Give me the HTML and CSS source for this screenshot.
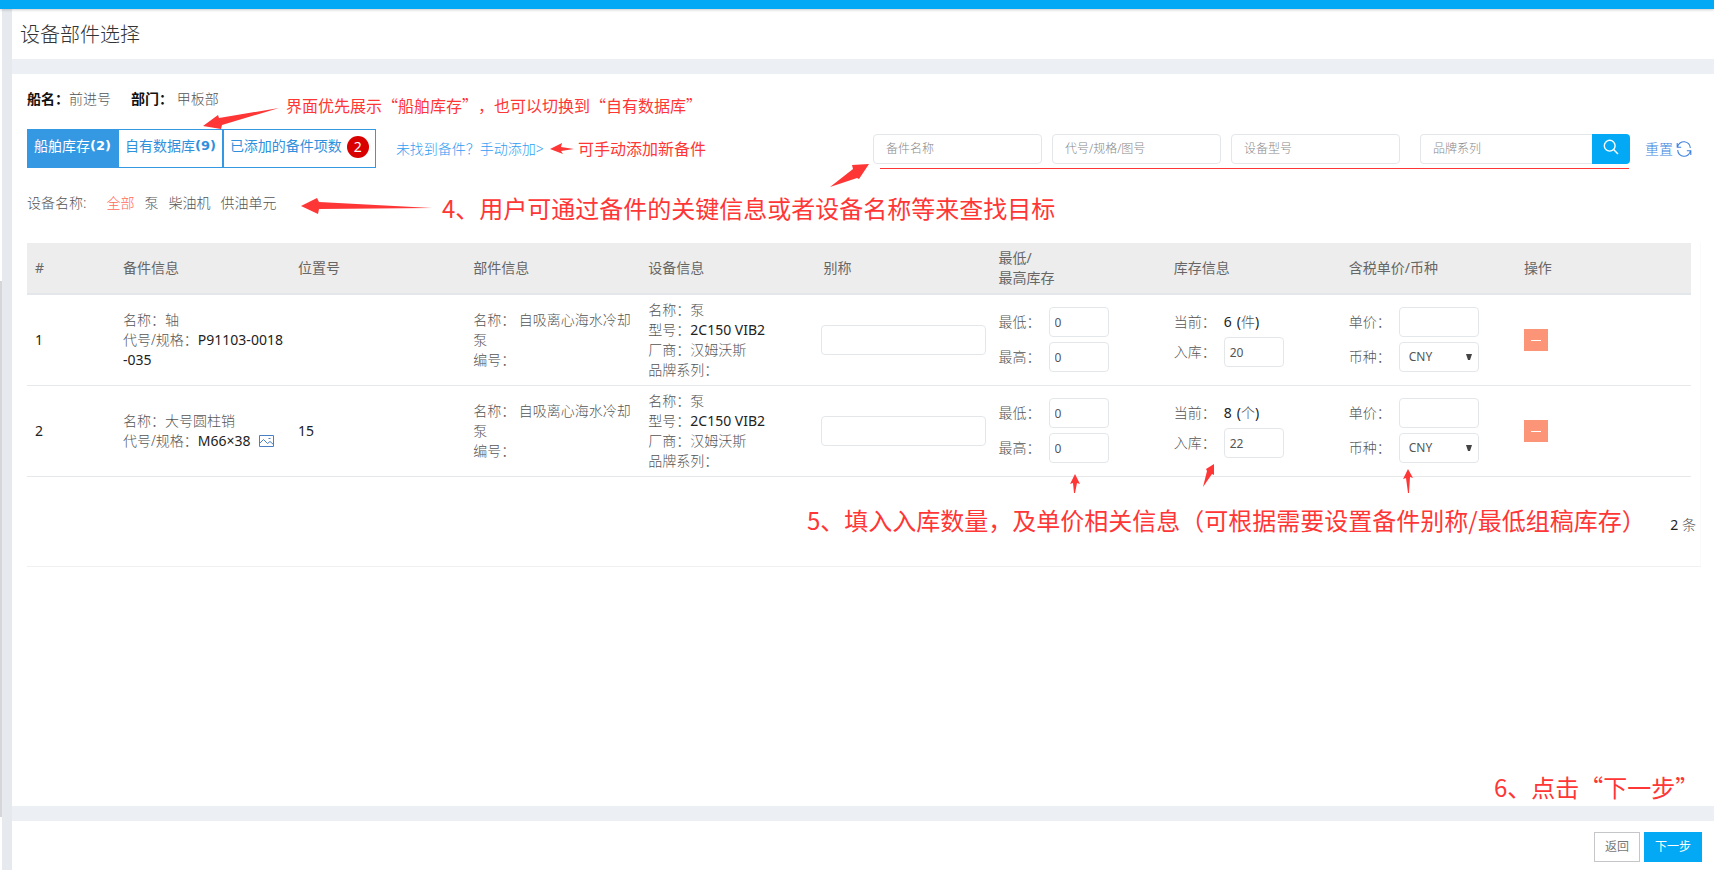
FILE: index.html
```html
<!DOCTYPE html>
<html lang="zh-CN">
<head>
<meta charset="utf-8">
<title>设备部件选择</title>
<link rel="stylesheet" href="styles.css">
</head>
<body>
<div class="topbar"></div>
<div class="shell">
  <div class="rail"><div class="rail-thumb"></div></div>
  <div class="content">
    <header class="card title-card"><h1>设备部件选择</h1></header>

    <main class="card main-card">
      <div class="info">
        <span><b>船名：</b>前进号</span>
        <span><b>部门：</b> 甲板部</span>
      </div>

      <div class="toolbar">
        <div class="tabs">
          <button class="tab active" type="button">船舶库存<b>(2)</b></button>
          <button class="tab" type="button">自有数据库<b>(9)</b></button>
          <button class="tab" type="button">已添加的备件项数<span class="badge">2</span></button>
        </div>
        <a class="add-link" href="#">未找到备件？手动添加&gt;</a>
        <form class="search">
          <input class="field" type="text" placeholder="备件名称" aria-label="备件名称">
          <input class="field" type="text" placeholder="代号/规格/图号" aria-label="代号/规格/图号">
          <input class="field" type="text" placeholder="设备型号" aria-label="设备型号">
          <div class="search-group">
            <input class="field" type="text" placeholder="品牌系列" aria-label="品牌系列">
            <button class="search-btn" type="button" aria-label="搜索">
              <svg width="16" height="16" viewBox="0 0 16 16" fill="none" stroke="currentColor" stroke-width="1.4"><circle cx="6.7" cy="6.7" r="5.4"/><path d="M10.6 10.6L15 15"/></svg>
            </button>
          </div>
          <a class="reset" href="#">重置
            <svg width="16" height="16" viewBox="0 0 16 16" fill="none" stroke="currentColor" stroke-width="1.1"><path d="M1.2 2v4.2h4M1.6 6A6.4 6.4 0 0 1 14.3 7M14.8 14V9.8h-4M14.4 10A6.4 6.4 0 0 1 1.7 9"/></svg>
          </a>
        </form>
      </div>

      <nav class="filter">
        <span class="filter-label">设备名称:</span>
        <a class="on" href="#">全部</a>
        <a href="#">泵</a>
        <a href="#">柴油机</a>
        <a href="#">供油单元</a>
      </nav>

      <section class="list">
        <table>
          <thead>
            <tr>
              <th class="col-no">#</th><th>备件信息</th><th>位置号</th><th>部件信息</th><th>设备信息</th><th>别称</th><th>最低/<br>最高库存</th><th>库存信息</th><th>含税单价/币种</th><th>操作</th>
            </tr>
          </thead>
          <tbody>
            <tr>
              <td>1</td>
              <td>名称：轴<br>代号/规格：<i>P91103-0018-035</i></td>
              <td></td>
              <td>名称： 自吸离心海水冷却泵<br>编号：</td>
              <td>名称：泵<br>型号：<i>2C150 VIB2</i><br>厂商：汉姆沃斯<br>品牌系列：</td>
              <td class="alias"><input class="field" type="text" aria-label="别称"></td>
              <td>
                <div class="pairs">
                  <label for="min1">最低：</label><input class="field num" id="min1" type="text" value="0">
                  <label for="max1">最高：</label><input class="field num" id="max1" type="text" value="0">
                </div>
              </td>
              <td>
                <div class="pairs">
                  <span>当前：</span><span class="stock"><i>6</i><span><i>(</i>件<i>)</i></span></span>
                  <label for="in1">入库：</label><input class="field num" id="in1" type="text" value="20">
                </div>
              </td>
              <td>
                <div class="pairs">
                  <label for="price1">单价：</label><input class="field price" id="price1" type="text">
                  <label for="cur1">币种：</label><span class="select"><select class="field" id="cur1"><option>CNY</option></select><svg width="6" height="6" viewBox="0 0 6 6"><path d="M0 0h6L4 6H2z" fill="#444"/></svg></span>
                </div>
              </td>
              <td><button class="remove" type="button" aria-label="移除"></button></td>
            </tr>
            <tr>
              <td>2</td>
              <td>名称：大号圆柱销<br>代号/规格：<i>M66×38</i> <svg class="pic" width="15" height="12" viewBox="0 0 15 12" fill="none" stroke="#4a7fc1"><path d="M.5.5h14v11H.5zM1 8l3.5-3.5 4 4L11 6.500l3.500 3M9.500 3.500h2"/></svg></td>
              <td>15</td>
              <td>名称： 自吸离心海水冷却泵<br>编号：</td>
              <td>名称：泵<br>型号：<i>2C150 VIB2</i><br>厂商：汉姆沃斯<br>品牌系列：</td>
              <td class="alias"><input class="field" type="text" aria-label="别称"></td>
              <td>
                <div class="pairs">
                  <label for="min2">最低：</label><input class="field num" id="min2" type="text" value="0">
                  <label for="max2">最高：</label><input class="field num" id="max2" type="text" value="0">
                </div>
              </td>
              <td>
                <div class="pairs">
                  <span>当前：</span><span class="stock"><i>8</i><span><i>(</i>个<i>)</i></span></span>
                  <label for="in2">入库：</label><input class="field num" id="in2" type="text" value="22">
                </div>
              </td>
              <td>
                <div class="pairs">
                  <label for="price2">单价：</label><input class="field price" id="price2" type="text">
                  <label for="cur2">币种：</label><span class="select"><select class="field" id="cur2"><option>CNY</option></select><svg width="6" height="6" viewBox="0 0 6 6"><path d="M0 0h6L4 6H2z" fill="#444"/></svg></span>
                </div>
              </td>
              <td><button class="remove" type="button" aria-label="移除"></button></td>
            </tr>
          </tbody>
        </table>
        <div class="pager"><i>2</i> 条</div>
      </section>
    </main>

    <footer class="card actions">
      <button class="btn" type="button">返回</button>
      <button class="btn primary" type="button">下一步</button>
    </footer>
  </div>
</div>

<!-- Guide notes drawn over the page -->
<div class="notes">
  <svg class="arrows" width="1714" height="870" viewBox="0 0 1714 870" fill="#ff3636">
    <path d="M203 126L218 115L219 118L279 108L222 125L221 129Z"/>
    <path d="M301 206L317 198L319 202L432 208L319 209L318 214Z"/>
    <path d="M550 149L562 143L561 147L574 149L561 151L563 154Z"/>
    <path d="M869 164L852 165L853 169L830 187L857 178L859 179Z"/>
    <path d="M1075 474L1070 484L1073 483L1074 493H1075L1077 483L1080 484Z"/>
    <path d="M1214 464L1206 469L1207 471L1203 487L1212 474L1214 475Z"/>
    <path d="M1408 469L1403 479L1406 478L1408 493H1409L1410 477L1413 478Z"/>
    <path d="M880 168H1629V169H880Z"/>
  </svg>
  <p class="note note-tabs">界面优先展示“船舶库存”，也可以切换到“自有数据库”</p>
  <p class="note note-add">可手动添加新备件</p>
  <p class="note large note-search">4、用户可通过备件的关键信息或者设备名称等来查找目标</p>
  <p class="note large note-fill">5、填入入库数量，及单价相关信息（可根据需要设置备件别称/最低组稿库存）</p>
  <p class="note large note-next">6、点击“下一步”</p>
</div>
</body>
</html>
```

FILE: styles.css
```css
* { box-sizing: border-box; }

body {
  margin: 0;
  min-height: 100vh;
  display: flex;
  flex-direction: column;
  position: relative;
  background: #ecf0f4;
  color: #555;
  font: 300 14px/20px "Noto Sans", "Noto Sans CJK SC", sans-serif;
  text-spacing-trim: space-all;
}

button, input, select { font: inherit; margin: 0; }
a { text-decoration: none; color: inherit; }
b { font-weight: 700; }
i { font-style: normal; font-weight: 400; color: #222; }

.topbar { height: 9px; background: #03a9f4; box-shadow: 0 1px 3px rgba(0, 0, 0, .2); position: relative; }
.shell { flex: 1; display: flex; }
.rail { width: 12px; padding-top: 272px; background: linear-gradient(90deg, #fff 2px, #e6eaee 2px); }
.rail-thumb { width: 2px; height: 536px; background: #d6d6d8; }
.content { flex: 1; display: flex; flex-direction: column; gap: 15px; }
.card { background: #fff; }

.title-card { padding: 13px 8px 12px; }
h1 { margin: 0; font-size: 20px; line-height: 25px; font-weight: 300; color: #333; }

.main-card { flex: 1; padding: 15px 13px 0 15px; }
.info { display: flex; gap: 20px; }
.info b { color: #111; }

.toolbar { display: flex; align-items: center; margin-top: 20px; padding-right: 9px; }
.tabs { display: flex; border: 1px solid #3498e2; }
.tab {
  display: flex;
  height: 37px;
  padding: 6px 6px 0 6px;
  border: 0;
  background: #fff;
  color: #3090dc;
  font-weight: 400;
}
.tab b { font-family: "DejaVu Sans", sans-serif; font-size: 13px; }
.tab + .tab + .tab { border-left: 2px solid #3498e2; }
.tab.active { padding-right: 8px; background: #3498e2; color: #fff; }
.badge {
  width: 22px;
  height: 22px;
  margin-left: 5px;
  border-radius: 50%;
  background: #d90000;
  color: #fff;
  line-height: 22px;
}
.add-link { margin-left: 20px; color: #2f9df2; }

.search { display: flex; gap: 10px; align-items: center; margin-left: auto; }
.field {
  width: 169px;
  height: 30px;
  padding: 0 12px;
  border: 1px solid #e4e7ea;
  border-radius: 4px;
  background: #fff;
  color: #555;
  font-size: 12px;
  font-weight: 400;
}
.field::placeholder { color: #888; opacity: 1; font-weight: 300; }
.search-group { display: flex; margin-left: 10px; }
.search-group .field { width: 172px; border-right: 0; border-radius: 4px 0 0 4px; }
.search-btn {
  width: 38px;
  height: 30px;
  padding: 0;
  border: 0;
  border-radius: 0 4px 4px 0;
  background: #03a9f4;
  color: #fff;
}
.search-btn svg { display: block; margin: 0 auto 3px; }
.reset { display: flex; align-items: center; gap: 3px; margin-left: 5px; color: #4080dc; }

.filter { display: flex; gap: 10px; margin-top: 25px; }
.filter-label { margin-right: 10px; }
.filter .on { color: #ff6a5a; }

.list { margin-top: 30px; height: 324px; border-bottom: 1px solid #f0f0f0; border-right: 1px solid #fafafa; }
table { width: calc(100% - 9px); border-collapse: separate; border-spacing: 0; table-layout: fixed; }
.col-no { width: 88px; }
th, td { padding: 5px 7px 5px 8px; text-align: left; vertical-align: middle; word-break: break-all; }
th { height: 52px; background: #ededed; border-bottom: 2px solid #e3e6ea; font-weight: 400; color: #666; }
td { border-bottom: 1px solid #e7e8ea; }
td:first-child, td:nth-child(3) { color: #222; font-weight: 400; }
td.alias { padding: 0 5px 0 6px; }
td.alias .field { width: 100%; display: block; }
.pic { margin-left: 5px; vertical-align: -1px; }

.pairs { display: grid; grid-template-columns: 50px auto; row-gap: 5px; align-items: center; justify-content: start; padding-bottom: 1px; }
.stock { display: flex; gap: 5px; }
.num { width: 60px; padding: 0 5px; }
.price { width: 80px; }
.select { position: relative; }
.select .field { width: 80px; padding: 0 9px; appearance: none; display: block; }
.select svg { position: absolute; right: 7px; top: 12px; }

.remove { display: block; width: 24px; height: 22px; padding: 0 7px; border: 0; background: #fc9578; }
.remove::before { content: ""; display: block; height: 1px; background: #fff; }

.pager { margin-top: 38px; padding-right: 4px; text-align: right; }

.actions { display: flex; justify-content: flex-end; gap: 4px; padding: 11px 12px 8px; }
.btn { height: 30px; padding: 0 10px; border: 1px solid #c4c6c9; background: #fff; color: #777; font-size: 12px; font-weight: 400; }
.btn.primary { border-color: #03a9f4; background: #03a9f4; color: #fff; }

.notes { position: absolute; inset: 0; overflow: hidden; pointer-events: none; }
.arrows { position: absolute; left: 0; top: 0; }
.note { position: absolute; margin: 0; white-space: nowrap; color: #ff3636; font: 16px/24px "Noto Sans CJK SC", sans-serif; }
.note.large { font-size: 24px; line-height: 32px; }
.note-tabs { left: 286px; top: 93px; }
.note-add { left: 578px; top: 136px; }
.note-search { left: 442px; top: 192px; }
.note-fill { left: 807px; top: 504px; }
.note-next { left: 1494px; top: 771px; }
```
